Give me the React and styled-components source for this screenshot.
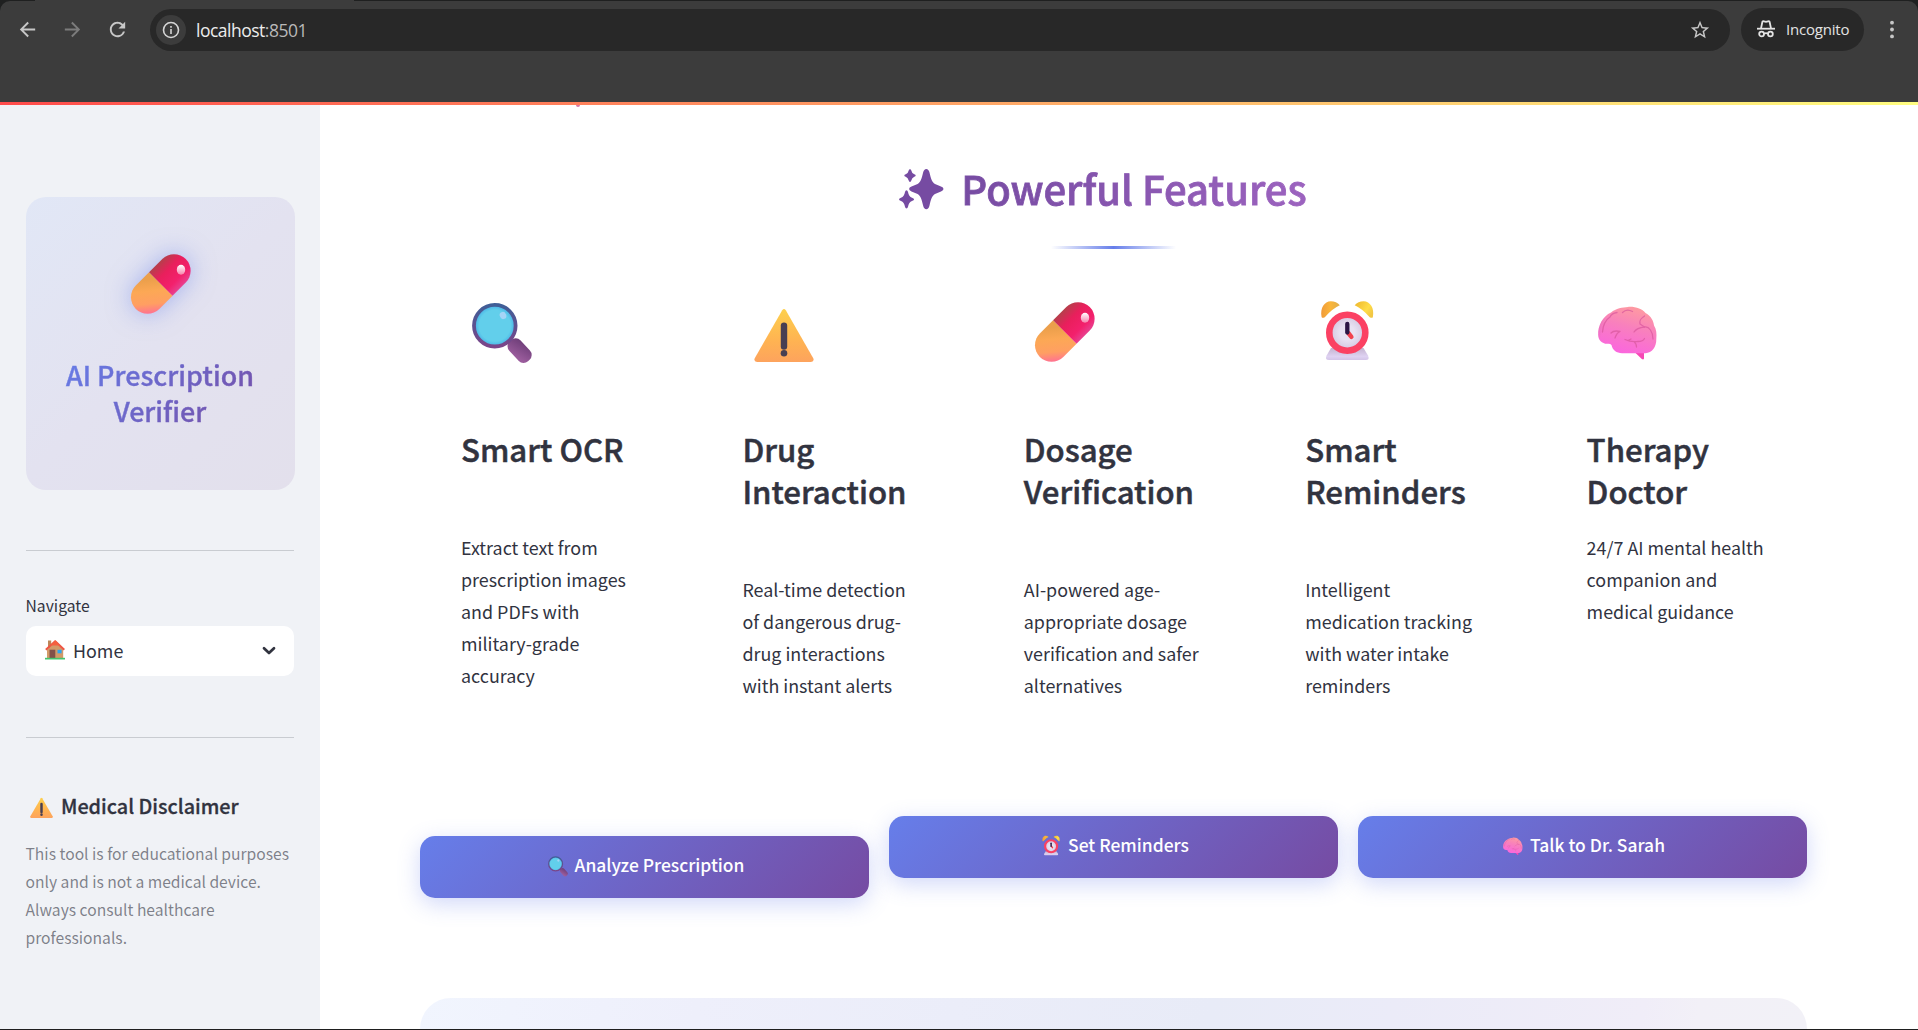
import React from 'react';
import styled, { createGlobalStyle } from 'styled-components';
import { MdArrowBack, MdArrowForward, MdRefresh, MdStarBorder } from 'react-icons/md';

const sans = '"Noto Sans CJK SC", "Noto Sans", sans-serif';
const ui = '"Open Sans", "Noto Sans", sans-serif';

const GlobalStyle = createGlobalStyle`
  * { box-sizing: border-box; }
  body { margin: 0; background: #fff; color: #31333f; font-family: ${sans}; overflow: hidden; }
  h1, h2, h3, p { margin: 0; }
  svg { display: block; flex: none; overflow: visible; }
`;

const Window = styled.div`
  display: flex;
  flex-direction: column;
  height: 1030px;
  border-bottom: 1px solid #1e1e1e;
  background: #fff;
  overflow: hidden;
`;

const Frame = styled.header`
  height: 102px;
  padding-top: 1px;
  background: linear-gradient(90deg, #1f2020 35px, #3c3c3c 35px, #3c3c3c 354px, #1f2020 354px);
`;

const Toolbar = styled.div`
  display: flex;
  align-items: flex-start;
  height: 101px;
  padding: 7px 17px 0 16px;
  border-radius: 10px 10px 0 0;
  background: #3c3c3c;
`;

const NavIcons = styled.div`
  display: flex;
  align-items: center;
  gap: 22px;
  height: 43px;
  width: 134px;
  color: #c7c7c7;
  svg:nth-child(2) { color: #7c7c7c; }
`;

const Address = styled.div`
  display: flex;
  align-items: center;
  width: 1580px;
  height: 42px;
  margin-top: 1px;
  padding: 0 19px 0 6px;
  border-radius: 21px;
  background: #282828;
  color: #c7c7c7;
`;

const InfoBadge = styled.span`
  display: grid;
  place-items: center;
  width: 30px;
  height: 30px;
  border-radius: 50%;
  background: #3c3c3c;
`;

const Url = styled.span`
  flex: 1;
  margin: 0 0 1px 10px;
  font: 17.5px/24px ${ui};
  letter-spacing: -0.5px;
  color: #b9b9b9;
  b { font-weight: 400; color: #ededed; }
`;

const Incognito = styled.div`
  display: flex;
  align-items: center;
  gap: 11px;
  width: 123px;
  height: 43px;
  margin: 0 20px 0 11px;
  padding: 0 0 2px 16px;
  border-radius: 22px;
  background: #282828;
  color: #e3e3e3;
  font: 15px/20px ${ui};
  letter-spacing: -0.2px;
`;

const Decoration = styled.div`
  flex: none;
  height: 3px;
  background: linear-gradient(90deg, #ff4b4b, #fffd80);
`;

const Page = styled.div`
  display: flex;
  flex: 1;
  min-height: 0;
`;

const Sidebar = styled.aside`
  width: 320px;
  flex: none;
  padding: 92px 26px 0;
  background: #f0f2f6;
`;

const Brand = styled.section`
  display: flex;
  flex-direction: column;
  align-items: center;
  width: 269px;
  height: 293px;
  padding-top: 57px;
  border-radius: 20px;
  background: linear-gradient(135deg, #e1e7f6, #e3e2f0 50%, #e3e0ec);
  svg { filter: drop-shadow(0 0 12px rgba(102, 126, 234, 0.5)); }
`;

const BrandName = styled.h2`
  width: 205px;
  margin: 43px 1px 0 0;
  font-size: 26.9px;
  line-height: 36px;
  font-weight: 500;
  text-align: center;
  color: transparent;
  background: linear-gradient(135deg, #667eea, #764ba2);
  background-clip: text;
  -webkit-text-stroke: 0.4px transparent;
`;

const Rule = styled.div`
  height: 1px;
  margin-top: ${(p) => p.$space}px;
  background: #c9ccd1;
`;

const Label = styled.div`
  margin: 42px 0 0 -0.5px;
  font-size: 15.7px;
  line-height: 26px;
`;

const Select = styled.div`
  display: flex;
  align-items: center;
  height: 50px;
  margin-top: 7px;
  padding: 0 18px;
  border-radius: 10px;
  background: #fff;
  font-size: 17.9px;
  line-height: 32px;
  svg:first-child { margin: -2px 0 0 1px; }
  span { flex: 1; margin: -3px 0 0 8px; }
`;

const NoteTitle = styled.h3`
  display: flex;
  align-items: center;
  gap: 8.5px;
  margin-top: 53px;
  padding-left: 3.5px;
  font-size: 19.8px;
  line-height: 30px;
  font-weight: 500;
  -webkit-text-stroke: 0.3px #31333f;
`;

const Note = styled.p`
  margin: 19px 0 0 -0.5px;
  font-size: 15.65px;
  line-height: 28px;
  color: rgba(49, 51, 63, 0.6);
  white-space: nowrap;
`;

const Main = styled.main`
  flex: 1;
  display: flex;
  flex-direction: column;
  padding: 0 111px 0 100px;
`;

const Pointer = styled.div`
  width: 4px;
  height: 2px;
  margin-left: 156px;
  border-radius: 0 0 2px 2px;
  background: #d878a4;
`;

const Heading = styled.h1`
  display: flex;
  align-items: center;
  justify-content: center;
  gap: 17px;
  height: 54px;
  margin-top: 54px;
  padding-right: 21px;
  font-size: 40px;
  line-height: 54px;
  font-weight: 500;
  svg { margin-top: 3px; }
  span {
    color: transparent;
    background: linear-gradient(90deg, #764ba2, #9c63bf);
    background-clip: text;
    -webkit-text-stroke: 0.8px transparent;
  }
`;

const Underline = styled.div`
  width: 125px;
  height: 3px;
  margin: 31px auto 0;
  background: linear-gradient(90deg, transparent, #667eea, transparent);
`;

const Features = styled.section`
  display: grid;
  grid-template-columns: repeat(5, 1fr);
  gap: 20px;
  height: 567px;
  padding-top: 53px;
`;

const Feature = styled.article`
  padding-left: 41px;
  svg { margin-left: 11.4px; }
`;

const FeatureTitle = styled.h2`
  margin-top: 66px;
  font-size: 31.2px;
  line-height: 42px;
  font-weight: 500;
  -webkit-text-stroke: 0.5px #31333f;
`;

const FeatureText = styled.p`
  margin-top: ${(p) => (p.$tight ? 19 : 61)}px;
  font-size: 17.9px;
  line-height: 32px;
  white-space: pre-line;
`;

const Actions = styled.section`
  display: grid;
  grid-template-columns: repeat(3, 1fr);
  align-items: start;
  gap: 20px;
  height: 182px;
  flex: none;
`;

const Action = styled.button`
  display: flex;
  align-items: center;
  justify-content: center;
  gap: 7px;
  height: 62px;
  margin-top: ${(p) => (p.$lowered ? 20 : 0)}px;
  padding: 0 0 4px 3px;
  border: 0;
  border-radius: 15px;
  background: linear-gradient(135deg, #667eea, #764ba2);
  box-shadow: 0 6px 22px rgba(102, 126, 234, 0.3);
  color: #fff;
  font: 500 17.45px/32px ${sans};
  svg { margin-top: 1px; }
`;

const NextPanel = styled.section`
  flex: 1;
  border-radius: 31px 31px 0 0;
  background: linear-gradient(100deg, #f1f5fe, #eeeffb 20%, #e8ebf7 57%, #ebebf8 70%, #f0edf8 88%, #f2f0f7 92%, #f2f1f7);
`;

const Pill = ({ size = 60 }) => (
  <svg width={size} height={size} viewBox="0 0 60 60">
    <defs>
      <linearGradient id="pillRed" x1="0" y1="0" x2="0" y2="1">
        <stop offset="0" stopColor="#b63f4b" />
        <stop offset="0.35" stopColor="#e91f5c" />
        <stop offset="0.75" stopColor="#f3206c" />
        <stop offset="1" stopColor="#e8408f" />
      </linearGradient>
      <linearGradient id="pillGold" x1="0.8" y1="0.1" x2="0.14" y2="0.85">
        <stop offset="0" stopColor="#eb9f4b" />
        <stop offset="0.35" stopColor="#fca855" />
        <stop offset="0.72" stopColor="#ff9f62" />
        <stop offset="1" stopColor="#ff7390" />
      </linearGradient>
      <linearGradient id="pillShine" x1="0" y1="0" x2="0" y2="1">
        <stop offset="0" stopColor="#fff" />
        <stop offset="1" stopColor="#f682ac" />
      </linearGradient>
    </defs>
    <g transform="translate(29.8 30) rotate(-45)">
      <path d="M0 -16.6H-18.7A16.6 16.6 0 0 0 -18.7 16.6H0Z" fill="url(#pillGold)" />
      <path d="M0 -16.6H18.7A16.6 16.6 0 0 1 18.7 16.6H0Z" fill="url(#pillRed)" />
    </g>
    <ellipse cx="50" cy="15.8" rx="4.2" ry="5" fill="url(#pillShine)" />
  </svg>
);

const Magnifier = ({ size = 60 }) => (
  <svg width={size} height={size} viewBox="0 0 60 60">
    <defs>
      <linearGradient id="lensRim" x1="0" y1="0" x2="0" y2="1">
        <stop offset="0" stopColor="#3f5e97" />
        <stop offset="1" stopColor="#7b4589" />
      </linearGradient>
      <radialGradient id="lensGlass">
        <stop offset="0.75" stopColor="#62cfeb" />
        <stop offset="1" stopColor="#43aee6" />
      </radialGradient>
      <linearGradient id="lensGrip" x1="0" y1="0" x2="0.5" y2="1">
        <stop offset="0" stopColor="#6b3c76" />
        <stop offset="1" stopColor="#9a5c9c" />
      </linearGradient>
    </defs>
    <path d="M36 37L43 45" stroke="#72437f" strokeWidth="6" />
    <rect x="-13.5" y="-7.6" width="27" height="15.2" rx="6.5" transform="translate(47.6 48.6) rotate(47)" fill="url(#lensGrip)" />
    <circle cx="22.8" cy="23.7" r="20.8" fill="url(#lensGlass)" stroke="url(#lensRim)" strokeWidth="3.8" />
    <ellipse cx="31" cy="13.5" rx="3.2" ry="3.7" transform="rotate(-25 31 13.5)" fill="#a5d4f6" />
  </svg>
);

const Warning = ({ size = 60 }) => (
  <svg width={size} height={size} viewBox="0 0 60 60">
    <defs>
      <linearGradient id="warnFill" x1="0" y1="0" x2="0" y2="1">
        <stop offset="0" stopColor="#fdd04d" />
        <stop offset="0.6" stopColor="#ffb352" />
        <stop offset="1" stopColor="#fda35d" />
      </linearGradient>
    </defs>
    <path d="M28.2 8.2Q30 5.8 31.8 8.2L59.4 56.4Q60.4 59.7 57 60H3Q-0.4 59.7 0.6 56.4Z" fill="url(#warnFill)" />
    <path d="M30 23.6V44.6" stroke="#483f52" strokeWidth="6.4" strokeLinecap="round" />
    <circle cx="30" cy="51.2" r="3.3" fill="#483f52" />
  </svg>
);

const Clock = ({ size = 60 }) => (
  <svg width={size} height={size} viewBox="0 0 60 60">
    <defs>
      <linearGradient id="bell" x1="0" y1="0" x2="1" y2="0">
        <stop offset="0" stopColor="#f09b3a" />
        <stop offset="0.5" stopColor="#fab539" />
        <stop offset="1" stopColor="#dfae4a" />
      </linearGradient>
      <linearGradient id="bellLight" x1="0" y1="0" x2="1" y2="0.6">
        <stop offset="0" stopColor="#edb52e" />
        <stop offset="0.7" stopColor="#ffdd48" />
        <stop offset="1" stopColor="#f2c744" />
      </linearGradient>
      <linearGradient id="clockBase" x1="0" y1="0" x2="0" y2="1">
        <stop offset="0" stopColor="#c3b3cf" />
        <stop offset="0.7" stopColor="#dfd2f2" />
        <stop offset="1" stopColor="#d3c4e8" />
      </linearGradient>
      <radialGradient id="clockDial">
        <stop offset="0.4" stopColor="#e8e1f2" />
        <stop offset="1" stopColor="#d2c5df" />
      </radialGradient>
    </defs>
    <path d="M14 46H46.5L51 53.5Q53 58 48.7 58H12Q7.600 58 9.600 53.500Z" fill="url(#clockBase)" />
    <path d="M4.600 15C2.800 6 7.500 -0.800 13.800 -0.800Q19.500 -0.800 22.800 3.200Q15 6.800 7.800 15.200Q5.200 16.600 4.600 15Z" fill="url(#bell)" />
    <path d="M55.900 15C57.700 6 53 -0.800 46.700 -0.800Q41 -0.800 37.700 3.200Q45.500 6.800 52.700 15.200Q55.300 16.600 55.900 15Z" fill="url(#bellLight)" />
    <circle cx="30.300" cy="30.700" r="18" fill="url(#clockDial)" stroke="#fb4163" strokeWidth="6.600" />
    <path d="M31.300 31L34.400 34.800" stroke="#f2414d" strokeWidth="4.400" strokeLinecap="round" />
    <path d="M30.300 22V30.500" stroke="#2c1645" strokeWidth="4.300" strokeLinecap="round" />
  </svg>
);

const Brain = ({ size = 60 }) => (
  <svg width={size} height={size} viewBox="0 0 60 60">
    <defs>
      <linearGradient id="brainFill" x1="0.75" y1="0" x2="0.4" y2="1">
        <stop offset="0" stopColor="#ff9d9e" />
        <stop offset="0.45" stopColor="#f880bd" />
        <stop offset="1" stopColor="#fb66de" />
      </linearGradient>
      <linearGradient id="brainFold" x1="0" y1="0" x2="1" y2="0.3">
        <stop offset="0" stopColor="#d268a8" stopOpacity="0.75" />
        <stop offset="0.3" stopColor="#d268a8" stopOpacity="0" />
      </linearGradient>
    </defs>
    <path d="M36.500 50H46V56.500Q45.500 58 43.800 57Z" fill="#f648b5" />
    <path d="M9.500 41.800C4 42 0.300 38 0.200 33C-0.300 23.500 5 14 13 10.500C18 6 24.500 5.500 30 4.900C38 4.500 44 7 47.500 11C53.500 14.500 55.500 19 56 23.500C58.500 27 58.800 32 58.300 37C58.500 45 54 51 47.500 51.200L24 51.200C18.500 51.200 14.500 48 13.500 43Q12 41.300 9.500 41.800Z" fill="url(#brainFill)" />
    <path d="M9.500 41.800C4 42 0.300 38 0.200 33C-0.300 23.500 5 14 13 10.500C18 6 24.500 5.500 30 4.900L22 30L13.500 43Q12 41.300 9.500 41.800Z" fill="url(#brainFold)" />
    <g fill="none" stroke="#d9579d" strokeWidth="1.300" strokeLinecap="round" strokeLinejoin="round" opacity="0.7">
      <path d="M4.500 30C5 22 9 17 12 15C13 12 16 11 19 10.500" />
      <path d="M24.500 10.500C27 8 31 7.500 34.500 9.500" />
      <path d="M46.500 14C44 16 41 17 42 22L46.500 25C51 24 55 30 55 37" />
      <path d="M36 30C38 27 42 25.500 46.500 25" />
      <path d="M13 31C16 28 20 29 22 29.500C18 31 18 34 17 36" />
      <path d="M27 37.500C31 39.500 36 40 40 39.500C43 39.500 45.500 38.500 46.500 36.500M36 39.800Q38.500 41.500 38.500 45M30 38.500L33 37" />
    </g>
  </svg>
);

const House = () => (
  <svg width="20" height="20" viewBox="0 0 20 20">
    <path d="M3 0.500H6.200V8H3Z" fill="#bd8658" />
    <path d="M2 9.500L10.200 2L18.200 9.500V18.500H2Z" fill="#d29a68" />
    <path d="M0.800 9.700L10.200 1.200L19.300 9.700" fill="none" stroke="#ef5644" strokeWidth="2" strokeLinejoin="round" />
    <path d="M10.200 0.300L15 5.500H5.500Z" fill="#f4603e" />
    <path d="M4.500 9.700H10.300V18H4.500Z" fill="#82504a" />
    <path d="M12.500 9.800H16.600V13.300H12.500Z" fill="#2aa5f1" />
    <path d="M0 17.800H20V19.500H0Z" fill="#44c46e" />
  </svg>
);

const Sparkles = () => (
  <svg width="45" height="42" viewBox="0 0 45 42" fill="#764ba2">
    <path d="M27.300 0Q29.600 0 30.500 3.500C32 10 33 13.200 36 15L42 17.600Q44.500 18.600 44.500 20Q44.500 21.400 42 22.400L36 25C33 26.800 32 30 30.500 36.500Q29.600 40.300 27.300 40.300Q25 40.300 24.100 36.500C22.600 30 21.600 26.800 18.600 25L12.500 22.400Q10.100 21.400 10.100 20Q10.100 18.600 12.500 17.600L18.600 15C21.600 13.200 22.600 10 24.100 3.500Q25 0 27.300 0Z" />
    <path d="M11 0.200Q12 0.200 12.300 1.500Q12.900 4.500 15.300 5.300Q16.700 5.800 16.700 6.500Q16.700 7.200 15.300 7.700Q12.900 8.500 12.300 11.600Q12 12.900 11 12.900Q10 12.900 9.700 11.600Q9.100 8.500 6.700 7.700Q5.300 7.200 5.300 6.500Q5.300 5.800 6.700 5.300Q9.100 4.500 9.700 1.500Q10 0.200 11 0.200Z" />
    <path d="M7.500 21.300Q8.600 21.300 9 23Q9.800 27.600 13 28.800Q15.100 29.600 15.100 30.400Q15.100 31.300 13 32Q9.800 33.200 9 37.700Q8.600 39.400 7.500 39.400Q6.400 39.400 6 37.700Q5.200 33.200 2 32Q0 31.300 0 30.400Q0 29.600 2 28.800Q5.200 27.600 6 23Q6.400 21.300 7.500 21.300Z" />
  </svg>
);

const InfoIcon = () => (
  <svg width="18" height="18" viewBox="0 0 18 18" fill="none" stroke="#d6d6d6" strokeWidth="1.600">
    <circle cx="9" cy="9" r="7.500" />
    <path d="M9 8V13M9 5V6.700" />
  </svg>
);

const IncognitoIcon = () => (
  <svg width="18" height="18" viewBox="0 0 18 18" fill="none" stroke="#e3e3e3" strokeWidth="1.800">
    <path d="M0 8.700H18" />
    <path d="M4 8.500L5.300 2.300Q5.600 0.900 7 1.300L9 1.900L11 1.300Q12.400 0.900 12.700 2.300L14 8.500" />
    <circle cx="4.600" cy="14" r="2.400" />
    <circle cx="13.400" cy="14" r="2.400" />
    <path d="M7 13.700Q9 12.600 11 13.700" />
  </svg>
);

const MoreIcon = () => (
  <svg width="16" height="43" viewBox="0 0 16 43" fill="#c7c7c7">
    <circle cx="8" cy="14.700" r="1.900" />
    <circle cx="8" cy="21.500" r="1.900" />
    <circle cx="8" cy="28.400" r="1.900" />
  </svg>
);

const Chevron = () => (
  <svg width="14" height="10" viewBox="0 0 14 10" fill="none" stroke="#31333f" strokeWidth="2.700" strokeLinecap="round" strokeLinejoin="round">
    <path d="M2 2.200L7 7L12 2.200" />
  </svg>
);

const features = [
  { Icon: Magnifier, title: 'Smart OCR', text: 'Extract text from\nprescription images\nand PDFs with\nmilitary-grade\naccuracy' },
  { Icon: Warning, title: 'Drug Interaction', text: 'Real-time detection\nof dangerous drug-\ndrug interactions\nwith instant alerts' },
  { Icon: Pill, title: 'Dosage Verification', text: 'AI-powered age-\nappropriate dosage\nverification and safer\nalternatives' },
  { Icon: Clock, title: 'Smart Reminders', text: 'Intelligent\nmedication tracking\nwith water intake\nreminders' },
  { Icon: Brain, title: 'Therapy Doctor', text: '24/7 AI mental health\ncompanion and\nmedical guidance', tight: true },
];

const actions = [
  { Icon: Magnifier, label: 'Analyze Prescription', lowered: true },
  { Icon: Clock, label: 'Set Reminders' },
  { Icon: Brain, label: 'Talk to Dr. Sarah' },
];

export default function App() {
  return (
    <>
      <GlobalStyle />
      <Window>
        <Frame>
          <Toolbar>
            <NavIcons>
              <MdArrowBack size={23} />
              <MdArrowForward size={23} />
              <MdRefresh size={23} />
            </NavIcons>
            <Address>
              <InfoBadge><InfoIcon /></InfoBadge>
              <Url><b>localhost</b>:8501</Url>
              <MdStarBorder size={22} />
            </Address>
            <Incognito><IncognitoIcon />Incognito</Incognito>
            <MoreIcon />
          </Toolbar>
        </Frame>
        <Decoration />
        <Page>
          <Sidebar>
            <Brand>
              <Pill />
              <BrandName>AI Prescription Verifier</BrandName>
            </Brand>
            <Rule $space={60} />
            <Label>Navigate</Label>
            <Select><House /><span>Home</span><Chevron /></Select>
            <Rule $space={61} />
            <NoteTitle><Warning size={23} />Medical Disclaimer</NoteTitle>
            <Note>
              This tool is for educational purposes<br />only and is not a medical device.<br />
              Always consult healthcare<br />professionals.
            </Note>
          </Sidebar>
          <Main>
            <Pointer />
            <Heading><Sparkles /><span>Powerful Features</span></Heading>
            <Underline />
            <Features>
              {features.map(({ Icon, title, text, tight }) => (
                <Feature key={title}>
                  <Icon />
                  <FeatureTitle>
                    {title === 'Smart OCR' ? title : title.split(' ').map((w) => <div key={w}>{w}</div>)}
                  </FeatureTitle>
                  <FeatureText $tight={tight}>{text}</FeatureText>
                </Feature>
              ))}
            </Features>
            <Actions>
              {actions.map(({ Icon, label, lowered }) => (
                <Action key={label} $lowered={lowered}><Icon size={20} />{label}</Action>
              ))}
            </Actions>
            <NextPanel />
          </Main>
        </Page>
      </Window>
    </>
  );
}
